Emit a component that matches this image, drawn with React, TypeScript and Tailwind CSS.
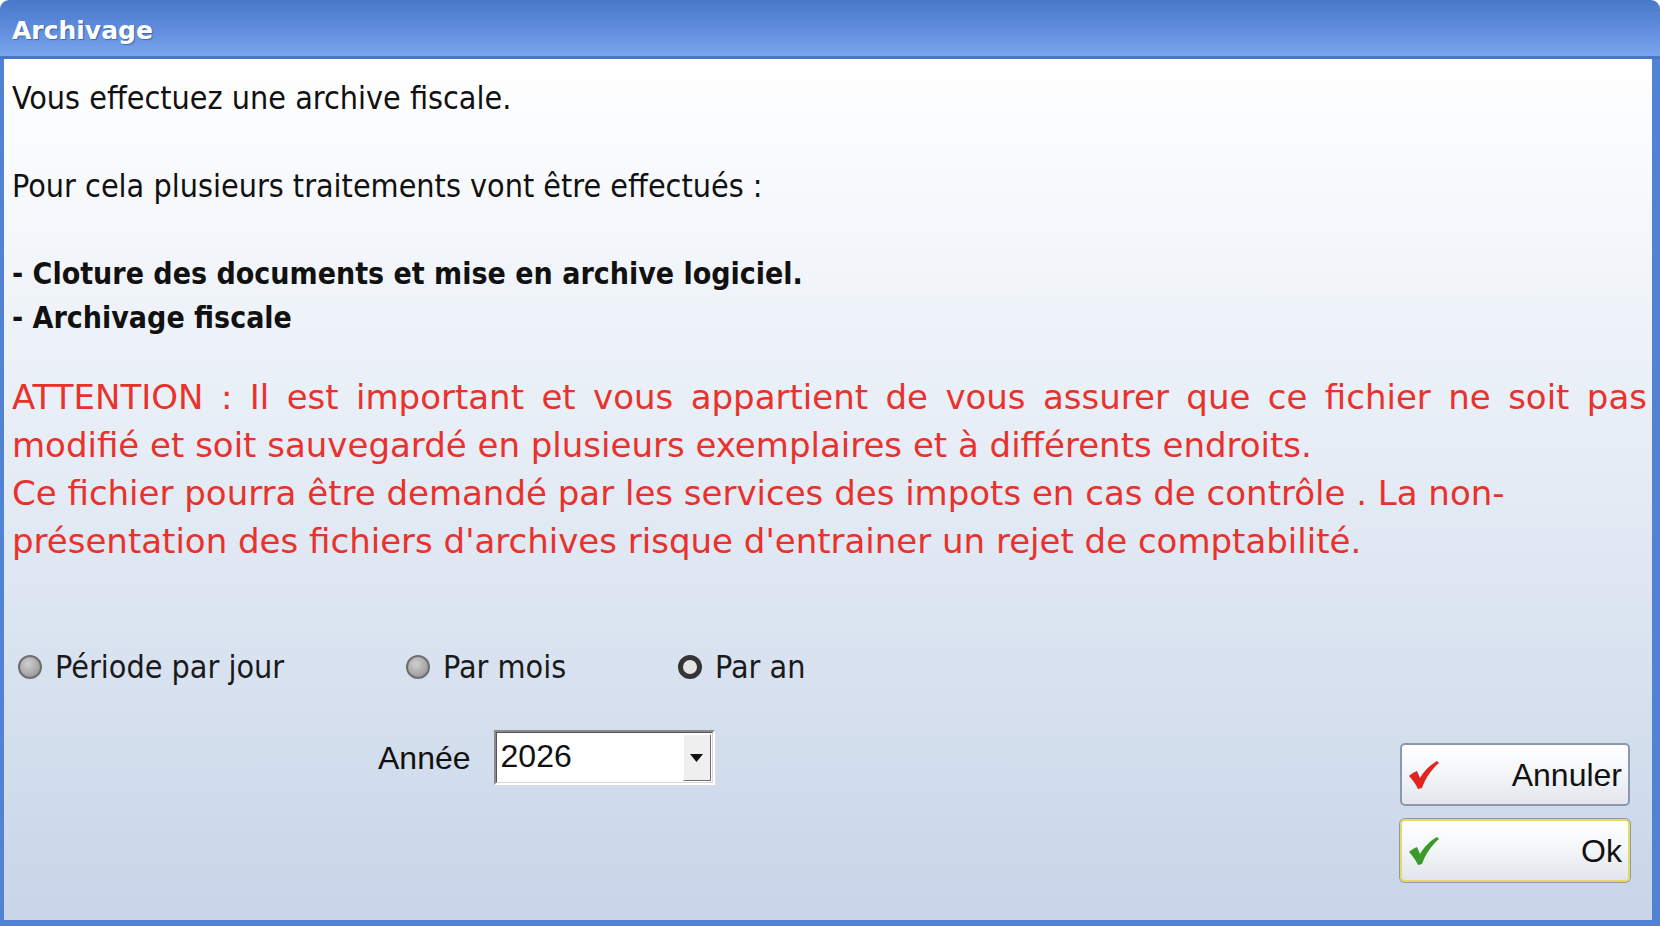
const tahoma = { fontFamily: '"DejaVu Sans Condensed", "DejaVu Sans", sans-serif' };
const verdana = { fontFamily: '"DejaVu Sans", sans-serif' };

function Check({ color }: { color: string }) {
  return (
    <svg width="32" height="30" viewBox="0 0 32 30">
      <path
        d="M1 16 C3 14 6 12 9 11 L12 18 C16 11 22 5 29 1 L31 3 C24 9 18 17 14 28 L10 29 C7 23 4 19 1 16 Z"
        fill={color}
      />
    </svg>
  );
}

function Radio({ checked, label, width }: { checked?: boolean; label: string; width: string }) {
  return (
    <div className={`flex items-center gap-[13px] ${width}`}>
      {checked ? (
        <span className="block h-[24px] w-[24px] rounded-full border-[5px] border-[#353535] bg-[#e4e4e4]" />
      ) : (
        <span className="block h-[24px] w-[24px] rounded-full border-[2px] border-[#6e6e6e] bg-[radial-gradient(circle_at_40%_35%,#cfcfcf,#8c8c8c)]" />
      )}
      <span className="text-[32px] leading-[40px] text-[#1a1a1a]" style={tahoma}>
        {label}
      </span>
    </div>
  );
}

function Button({ label, color, focused }: { label: string; color: string; focused?: boolean }) {
  return (
    <button
      className={`flex h-[63px] w-[230px] items-center justify-between rounded-[5px] border-[2px] bg-[linear-gradient(#ffffff,#f4f6f9_45%,#e2e6ec)] pl-[6px] pr-[6px] ${
        focused ? "border-[#e6d966] shadow-[0_0_0_1px_#8f9aa8]" : "border-[#8a99ae]"
      }`}
    >
      <Check color={color} />
      <span className="font-['Liberation_Sans',Arial,sans-serif] text-[32px] leading-none text-[#111]">{label}</span>
    </button>
  );
}

export default function App() {
  return (
    <div className="flex h-[926px] w-[1660px] flex-col bg-white">
      <div className="flex h-[59px] shrink-0 items-center rounded-t-[9px] border-b-[3px] border-[#4a74c6] bg-[linear-gradient(#4a79cb,#5c8ad9_45%,#78a6ee)] pl-[12px] pt-[5px]">
        <span
          className="text-[25px] font-bold text-white [text-shadow:1px_1px_1px_rgba(30,50,110,0.5)]"
          style={verdana}
        >
          Archivage
        </span>
      </div>
      <div className="flex flex-1 flex-col border-b-[6px] border-l-[4px] border-r-[8px] border-[#5282d4] bg-[linear-gradient(#ffffff,#e6edf6_45%,#c8d5e8)]">
        <div className="px-[8px] pt-[17px] text-[32px] leading-[44px] text-[#111]" style={tahoma}>
          <div>Vous effectuez une archive fiscale.</div>
          <div className="h-[44px]" />
          <div>Pour cela plusieurs traitements vont être effectués :</div>
          <div className="h-[44px]" />
          <div className="text-[30px] font-bold">- Cloture des documents et mise en archive logiciel.</div>
          <div className="text-[30px] font-bold">- Archivage fiscale</div>
        </div>
        <div className="mt-[33px] pl-[8px] pr-[5px] text-[34px] leading-[48px] text-[#e8322b]" style={verdana}>
          <div className="text-justify [text-align-last:justify]">
            ATTENTION : Il est important et vous appartient de vous assurer que ce fichier ne soit pas
          </div>
          <div>modifié et soit sauvegardé en plusieurs exemplaires et à différents endroits.</div>
          <div>Ce fichier pourra être demandé par les services des impots en cas de contrôle . La non-</div>
          <div>présentation des fichiers d'archives risque d'entrainer un rejet de comptabilité.</div>
        </div>
        <div className="mt-[82px] flex pl-[14px]">
          <Radio label="Période par jour" width="w-[388px]" />
          <Radio label="Par mois" width="w-[272px]" />
          <Radio label="Par an" checked width="w-[200px]" />
        </div>
        <div className="mt-[43px] flex items-start justify-between pr-[22px]">
          <div className="ml-[374px] flex items-center gap-[23px]">
            <span className="font-['Liberation_Sans',Arial,sans-serif] text-[32px] text-[#111]">Année</span>
            <div className="h-[55px] w-[221px] border-[2px] border-b-white border-l-[#8a8a8a] border-r-white border-t-[#8a8a8a]">
              <div className="flex h-full border-[1px] border-b-[#d8d8d8] border-l-[#555] border-r-[#d8d8d8] border-t-[#555] bg-white">
                <span className="flex-1 pl-[4px] font-['Liberation_Sans',Arial,sans-serif] text-[32px] leading-[47px] text-[#111]">
                  2026
                </span>
                <div className="m-[1px] flex w-[28px] items-center justify-center border-[1px] border-b-[#707070] border-l-white border-r-[#707070] border-t-white bg-[#efefef]">
                  <svg width="13" height="8" viewBox="0 0 13 8">
                    <path d="M0 0 H13 L6.5 8 Z" fill="#111" />
                  </svg>
                </div>
              </div>
            </div>
          </div>
          <div className="mt-[13px] flex flex-col gap-[13px]">
            <Button label="Annuler" color="#e0261e" />
            <Button label="Ok" color="#3b9a2a" focused />
          </div>
        </div>
      </div>
    </div>
  );
}
